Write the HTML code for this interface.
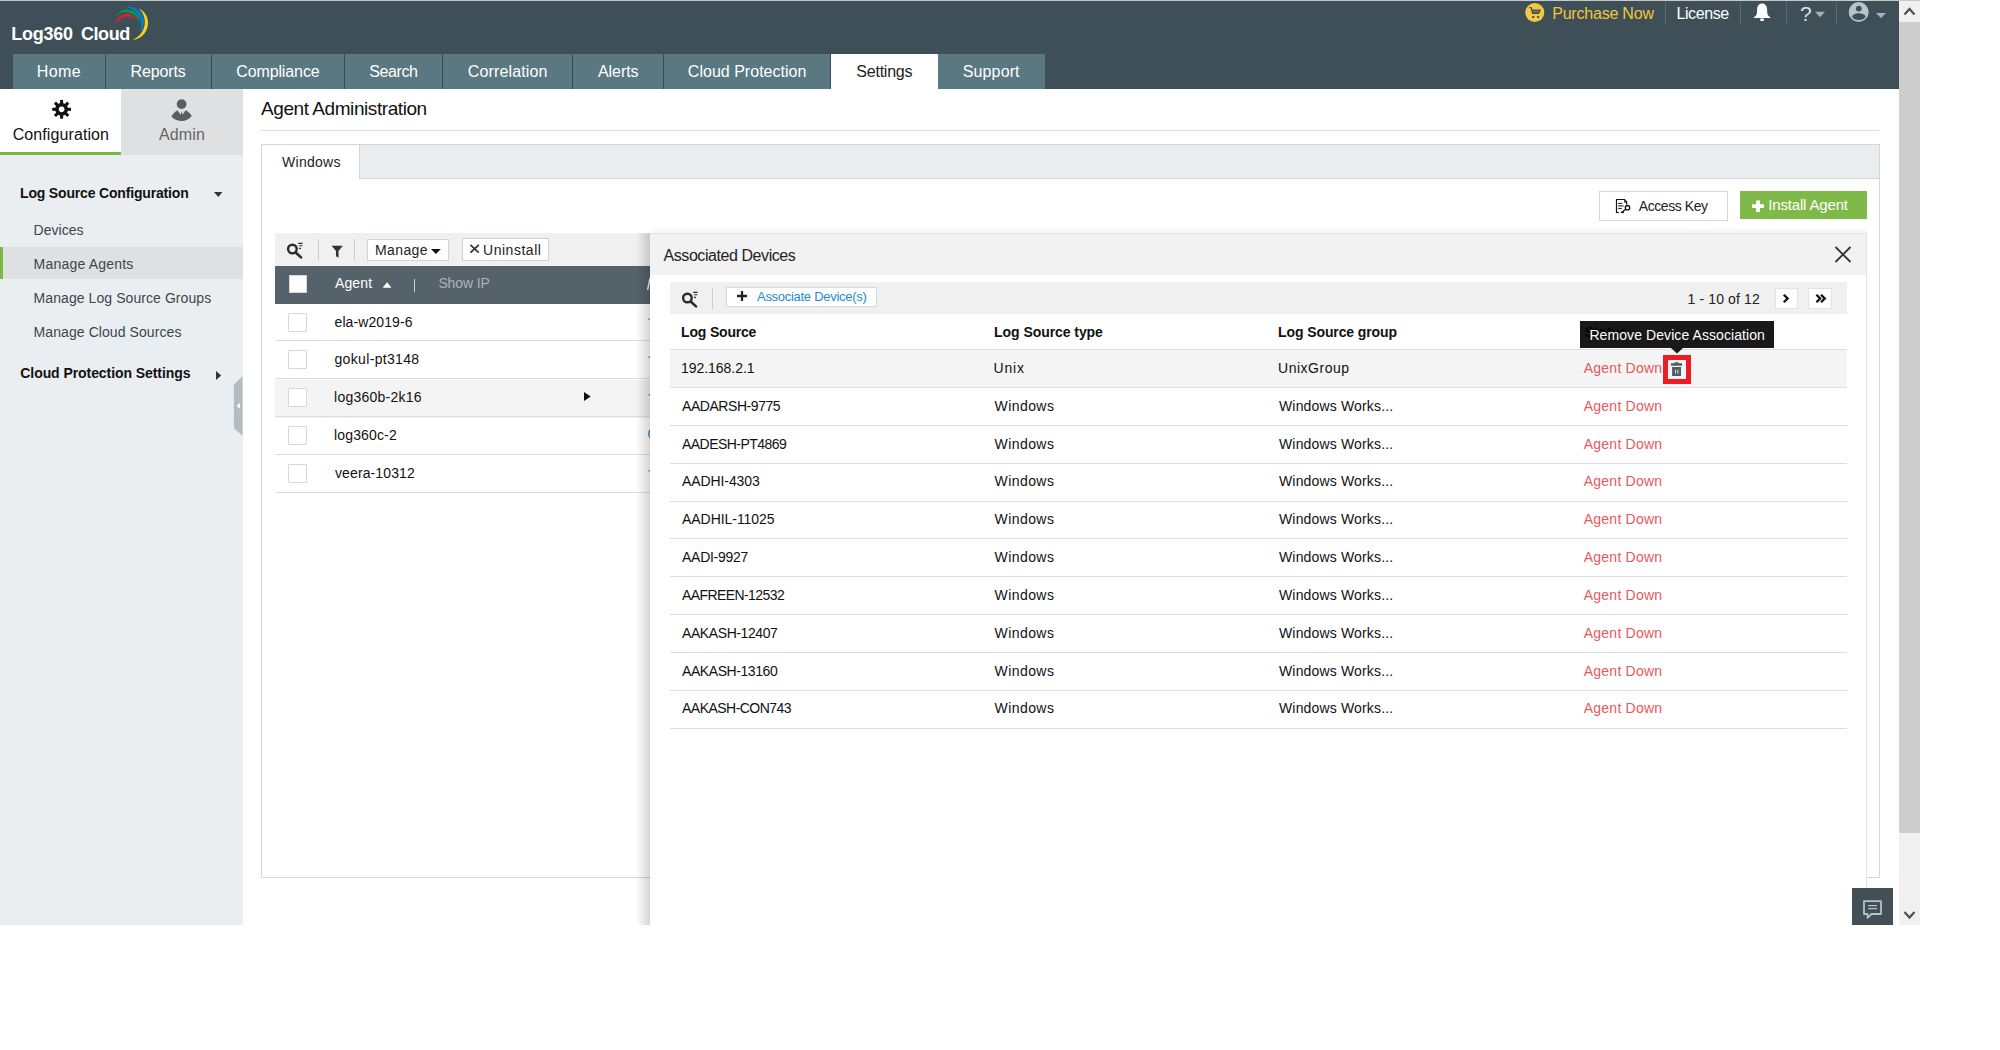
<!DOCTYPE html>
<html><head><meta charset="utf-8"><style>
html,body{margin:0;padding:0;background:#fff;width:2000px;height:1050px;overflow:hidden;}
body{position:relative;font-family:"Liberation Sans",sans-serif;}
#page{position:absolute;left:0;top:0;width:1920px;height:925px;overflow:hidden;}
.t{position:absolute;white-space:nowrap;line-height:1;}
.b{position:absolute;}
svg{position:absolute;overflow:visible}
</style></head><body>
<div id="page">
<div class="b" style="left:0px;top:0px;width:1920px;height:1px;background:#c9c9c9"></div>
<div class="b" style="left:0px;top:1px;width:1899px;height:88px;background:#3e4f57"></div>
<div class="b" style="left:0px;top:89px;width:243px;height:836px;background:#eaeef0"></div>
<div class="b" style="left:0px;top:89px;width:121px;height:63px;background:#fff"></div>
<div class="b" style="left:0px;top:152px;width:121px;height:3px;background:#78b843"></div>
<div class="b" style="left:121px;top:89px;width:122px;height:66px;background:#dfe0e2"></div>
<div class="b" style="left:1899px;top:1px;width:21px;height:924px;background:#f0f0f0"></div>
<div class="b" style="left:1899px;top:22px;width:21px;height:811px;background:#cdcdcd"></div>
<svg style="left:1899px;top:1px" width="21" height="924" viewBox="1899 1 21 924"><path d="M1904.5,14.5 L1909.5,9 L1914.5,14.5" fill="none" stroke="#505050" stroke-width="2.2"/><path d="M1904.5,912 L1909.5,917.5 L1914.5,912" fill="none" stroke="#505050" stroke-width="2.2"/></svg>
<div class="t" style="left:11.20px;top:25.00px;font-size:18px;color:#fff;font-weight:bold;letter-spacing:-0.220px;">Log360</div>
<div class="t" style="left:80.90px;top:25.00px;font-size:18px;color:#fff;font-weight:bold;letter-spacing:-0.400px;">Cloud</div>
<svg style="left:110px;top:3px" width="42" height="40" viewBox="110 3 42 40"><path d="M115.4,24.6 A11.63,11.63 0 0 1 137.4,20.2 A13.84,13.84 0 0 0 115.4,24.6Z" fill="#e31e35"/><path d="M115.8,16.6 A12.54,12.54 0 0 1 139.6,23.4 A13.92,13.92 0 0 0 115.8,16.6Z" fill="#00a04a"/><path d="M125.6,7.0 A15.24,15.24 0 0 1 139.6,32.8 A18.40,18.40 0 0 0 125.6,7.0Z" fill="#0a7cc4"/><path d="M138.6,8 A16.77,16.77 0 0 1 132.4,39.8 A18.92,18.92 0 0 0 138.6,8Z" fill="#fcd01e"/></svg>
<div class="b" style="left:13px;top:54px;width:92px;height:35px;background:#5a7882"></div>
<div class="t" style="left:36.83px;top:64.00px;font-size:16px;color:#fff;letter-spacing:0.350px;">Home</div>
<div class="b" style="left:106px;top:54px;width:105px;height:35px;background:#5a7882"></div>
<div class="t" style="left:130.45px;top:64.00px;font-size:16px;color:#fff;letter-spacing:-0.117px;">Reports</div>
<div class="b" style="left:212px;top:54px;width:132px;height:35px;background:#5a7882"></div>
<div class="t" style="left:236.20px;top:64.00px;font-size:16px;color:#fff;letter-spacing:-0.111px;">Compliance</div>
<div class="b" style="left:345px;top:54px;width:97px;height:35px;background:#5a7882"></div>
<div class="t" style="left:369.30px;top:64.00px;font-size:16px;color:#fff;letter-spacing:-0.400px;">Search</div>
<div class="b" style="left:443px;top:54px;width:129px;height:35px;background:#5a7882"></div>
<div class="t" style="left:467.80px;top:64.00px;font-size:16px;color:#fff;letter-spacing:0.130px;">Correlation</div>
<div class="b" style="left:573px;top:54px;width:90px;height:35px;background:#5a7882"></div>
<div class="t" style="left:598.00px;top:64.00px;font-size:16px;color:#fff;letter-spacing:-0.080px;">Alerts</div>
<div class="b" style="left:664px;top:54px;width:166px;height:35px;background:#5a7882"></div>
<div class="t" style="left:687.83px;top:64.00px;font-size:16px;color:#fff;letter-spacing:0.017px;">Cloud Protection</div>
<div class="b" style="left:831px;top:54px;width:107px;height:35px;background:#fff"></div>
<div class="t" style="left:856.30px;top:64.00px;font-size:16px;color:#222;letter-spacing:-0.229px;">Settings</div>
<div class="b" style="left:938px;top:54px;width:107px;height:35px;background:#5a7882"></div>
<div class="t" style="left:962.80px;top:64.00px;font-size:16px;color:#fff;letter-spacing:0.117px;">Support</div>
<div class="b" style="left:105px;top:54px;width:1px;height:35px;background:#3a4a52"></div>
<div class="b" style="left:211px;top:54px;width:1px;height:35px;background:#3a4a52"></div>
<div class="b" style="left:344px;top:54px;width:1px;height:35px;background:#3a4a52"></div>
<div class="b" style="left:442px;top:54px;width:1px;height:35px;background:#3a4a52"></div>
<div class="b" style="left:572px;top:54px;width:1px;height:35px;background:#3a4a52"></div>
<div class="b" style="left:663px;top:54px;width:1px;height:35px;background:#3a4a52"></div>
<svg style="left:1524px;top:2px" width="22" height="22" viewBox="1524 2 22 22"><circle cx="1534.8" cy="12.5" r="9.5" fill="#f5c842"/><path d="M1529.3,7.6 H1531.2 L1532.6,13.4 H1538.6 L1540.2,10.2 H1531.6" fill="none" stroke="#3e4f57" stroke-width="1.3" stroke-linejoin="round"/><path d="M1532,10.6 H1539.6 L1538.4,13 H1532.6Z" fill="#3e4f57" opacity="0.75"/><rect x="1532.2" y="16" width="2" height="2" fill="#3e4f57"/><rect x="1537.2" y="16" width="2" height="2" fill="#3e4f57"/></svg>
<div class="t" style="left:1552.20px;top:6.00px;font-size:16px;color:#f3c53a;letter-spacing:-0.209px;">Purchase Now</div>
<div class="t" style="left:1676.40px;top:6.00px;font-size:16px;color:#fff;letter-spacing:-0.400px;">License</div>
<div class="b" style="left:1665px;top:2px;width:1px;height:23px;background:#5a6970"></div>
<div class="b" style="left:1740px;top:2px;width:1px;height:23px;background:#5a6970"></div>
<div class="b" style="left:1786px;top:2px;width:1px;height:23px;background:#5a6970"></div>
<div class="b" style="left:1836px;top:2px;width:1px;height:23px;background:#5a6970"></div>
<svg style="left:1750px;top:1px" width="24" height="24" viewBox="1750 1 24 24"><path d="M1762,3.6 C1759.2,3.6 1757.4,5.6 1757.2,8.6 L1756.9,13.2 C1756.7,15 1755.6,16.2 1753.8,17.2 L1753.8,18 H1770.4 L1770.4,17.2 C1768.6,16.2 1767.4,15 1767.3,13.2 L1767,8.6 C1766.8,5.6 1765,3.6 1762,3.6Z" fill="#fff"/><rect x="1760.2" y="18.6" width="3.8" height="2.4" rx="0.8" fill="#fff"/></svg>
<div class="t" style="left:1800.10px;top:3.00px;font-size:21px;color:#d9e0e3;">?</div>
<svg style="left:1812px;top:10px" width="16" height="10" viewBox="1812 10 16 10"><path d="M1815,11.8 H1825 L1820,17.3Z" fill="#a3b2b9"/></svg>
<svg style="left:1846px;top:0px" width="44" height="24" viewBox="1846 0 44 24"><circle cx="1858.7" cy="12" r="10" fill="#b6c3c9"/><circle cx="1858.8" cy="8.6" r="2.9" fill="#3e4f57"/><ellipse cx="1858.8" cy="16.6" rx="6.6" ry="3.3" fill="#3e4f57"/><path d="M1876,13 H1886 L1881,18.2Z" fill="#a3b2b9"/></svg>
<svg style="left:50px;top:98px" width="24" height="24" viewBox="50 98 24 24"><g fill="#111"><rect x="60.1" y="99.9" width="3" height="5" transform="rotate(0 61.6 109.3)"/><rect x="60.1" y="99.9" width="3" height="5" transform="rotate(45 61.6 109.3)"/><rect x="60.1" y="99.9" width="3" height="5" transform="rotate(90 61.6 109.3)"/><rect x="60.1" y="99.9" width="3" height="5" transform="rotate(135 61.6 109.3)"/><rect x="60.1" y="99.9" width="3" height="5" transform="rotate(180 61.6 109.3)"/><rect x="60.1" y="99.9" width="3" height="5" transform="rotate(225 61.6 109.3)"/><rect x="60.1" y="99.9" width="3" height="5" transform="rotate(270 61.6 109.3)"/><rect x="60.1" y="99.9" width="3" height="5" transform="rotate(315 61.6 109.3)"/></g><path fill="#111" fill-rule="evenodd" d="M61.6,102.9 a6.4,6.4 0 1,0 0.001,0Z M61.6,106.4 a2.9,2.9 0 1,1 -0.001,0Z"/></svg>
<div class="t" style="left:12.70px;top:127.00px;font-size:16px;color:#111;letter-spacing:0.092px;">Configuration</div>
<svg style="left:168px;top:97px" width="28" height="27" viewBox="168 97 28 27"><circle cx="181.6" cy="104.1" r="4.9" fill="#5b5e5f"/><path d="M171.4,116.6 C173.5,113 175.5,111.2 177.3,110.2 L180.7,114.8 L181.6,111 L182.5,114.8 L185.7,110.2 C188,111.2 190.2,113.2 191.7,116 C189,119.6 185.6,121 181.6,121 C177.4,121 174,119.6 171.4,116.6Z" fill="#5b5e5f"/><path d="M181.05,110.6 H182.15 L181.6,112.4Z" fill="#dfe0e2"/></svg>
<div class="t" style="left:159.00px;top:127.00px;font-size:16px;color:#666;letter-spacing:0.150px;">Admin</div>
<div class="t" style="left:20.00px;top:186.00px;font-size:14px;color:#111;font-weight:bold;letter-spacing:-0.170px;">Log Source Configuration</div>
<svg style="left:212px;top:190px" width="12" height="9" viewBox="212 190 12 9"><path d="M214,192 H222.5 L218.25,197Z" fill="#333"/></svg>
<div class="b" style="left:0px;top:247px;width:243px;height:32px;background:#dfe0e2"></div>
<div class="b" style="left:0px;top:247px;width:3px;height:32px;background:#78b843"></div>
<div class="t" style="left:33.60px;top:223.00px;font-size:14px;color:#3b4652;letter-spacing:0.017px;">Devices</div>
<div class="t" style="left:33.60px;top:257.00px;font-size:14px;color:#3b4652;letter-spacing:0.200px;">Manage Agents</div>
<div class="t" style="left:33.60px;top:291.00px;font-size:14px;color:#3b4652;letter-spacing:0.074px;">Manage Log Source Groups</div>
<div class="t" style="left:33.60px;top:325.00px;font-size:14px;color:#3b4652;letter-spacing:0.079px;">Manage Cloud Sources</div>
<div class="t" style="left:20.30px;top:366.00px;font-size:14px;color:#111;font-weight:bold;letter-spacing:-0.071px;">Cloud Protection Settings</div>
<svg style="left:214px;top:369px" width="10" height="12" viewBox="214 369 10 12"><path d="M216,371 L221.2,375.5 L216,380Z" fill="#333"/></svg>
<svg style="left:232px;top:374px" width="12" height="64" viewBox="232 374 12 64"><path d="M233.9,384.4 L242.5,376 V435.8 L233.9,428.2Z" fill="#b5bbbe"/><path d="M240,403 V408.7 L236.6,405.85Z" fill="#fff"/></svg>
<div class="t" style="left:261.00px;top:99.00px;font-size:19px;color:#111;letter-spacing:-0.426px;">Agent Administration</div>
<div class="b" style="left:261px;top:130px;width:1618px;height:1px;background:#dcdcdc"></div>
<div class="b" style="left:261px;top:144px;width:1619px;height:734px;border:1px solid #d6d6d6;box-sizing:border-box;background:#fff"></div>
<div class="b" style="left:359px;top:145px;width:1520px;height:34px;background:#eaedef;border-bottom:1px solid #d6d6d6;border-left:1px solid #d6d6d6;box-sizing:border-box"></div>
<div class="t" style="left:282.00px;top:155.00px;font-size:14px;color:#222;letter-spacing:0.283px;">Windows</div>
<div class="b" style="left:1599px;top:191px;width:129px;height:30px;border:1px solid #cfd8dc;box-sizing:border-box;background:#fff"></div>
<svg style="left:1612px;top:196px" width="20" height="20" viewBox="1612 196 20 20"><path d="M1619,212.5 H1616.5 V199.5 H1624.5 L1626.6,201.8 V204.6" fill="none" stroke="#111" stroke-width="1.2"/><path d="M1624.2,199.8 V202.4 H1626.4Z" fill="#111"/><path d="M1618.2,203.4 H1622.4 M1618.2,205.9 H1623.6 M1618.2,208.4 H1621.8" stroke="#111" stroke-width="1"/><circle cx="1627.5" cy="207.7" r="2.2" fill="none" stroke="#111" stroke-width="1.3"/><path d="M1625.8,209.3 L1621,212.8 M1622.6,211.6 L1623.6,213.2" stroke="#111" stroke-width="1.4"/></svg>
<div class="t" style="left:1638.75px;top:199.00px;font-size:14px;color:#222;letter-spacing:-0.422px;">Access Key</div>
<div class="b" style="left:1740px;top:191px;width:127px;height:28px;background:#7fba49"></div>
<svg style="left:1750px;top:198px" width="16" height="16" viewBox="1750 198 16 16"><path d="M1756.1,200.5 H1760 V204.2 H1763.9 V208 H1760 V212 H1756.1 V208 H1752.1 V204.2 H1756.1Z" fill="#fff"/></svg>
<div class="t" style="left:1768.20px;top:197.00px;font-size:15px;color:#fff;letter-spacing:-0.158px;">Install Agent</div>
<div class="b" style="left:275px;top:233px;width:400px;height:33px;background:#f0f0f0"></div>
<svg style="left:283px;top:239px" width="24" height="22" viewBox="283 239 24 22"><circle cx="292.4" cy="249" r="4.3" fill="none" stroke="#2b2b2b" stroke-width="2.4"/><path d="M296.2,253 L301.0,257.4" stroke="#2b2b2b" stroke-width="2.6" stroke-linecap="round"/><path d="M298.2,243.4 H302.59999999999997 M299.2,245.8 H302.4 M299.0,248.4 H301.0" stroke="#2b2b2b" stroke-width="1.1"/></svg>
<div class="b" style="left:318px;top:239px;width:1px;height:21px;background:#cdcdcd"></div>
<svg style="left:328px;top:242px" width="18" height="18" viewBox="328 242 18 18"><path d="M331.6,245.8 H342.8 L338.5,251 V257.8 L336,256.3 V251Z" fill="#333"/></svg>
<div class="b" style="left:354px;top:239px;width:1px;height:21px;background:#cdcdcd"></div>
<div class="b" style="left:367px;top:239px;width:82px;height:22px;border:1px solid #cad4d9;box-sizing:border-box;background:#fff"></div>
<div class="t" style="left:374.90px;top:243.00px;font-size:14px;color:#222;letter-spacing:0.420px;">Manage</div>
<svg style="left:429px;top:246px" width="14" height="10" viewBox="429 246 14 10"><path d="M431,249 H440.8 L435.9,254Z" fill="#111"/></svg>
<div class="b" style="left:462px;top:238px;width:87px;height:23px;border:1px solid #cad4d9;box-sizing:border-box;background:#fff"></div>
<svg style="left:468px;top:242px" width="14" height="14" viewBox="468 242 14 14"><path d="M470.4,244.8 L478.8,252.6 M478.8,244.8 L470.4,252.6" stroke="#333" stroke-width="1.7"/></svg>
<div class="t" style="left:483.00px;top:243.00px;font-size:14px;color:#222;letter-spacing:0.525px;">Uninstall</div>
<div class="b" style="left:275px;top:266px;width:400px;height:38px;background:#56626a"></div>
<div class="b" style="left:289px;top:275px;width:18px;height:18px;background:#fff;border:1px solid #d8d8d8;box-sizing:border-box"></div>
<div class="t" style="left:335.00px;top:276.00px;font-size:14px;color:#fff;letter-spacing:0.125px;">Agent</div>
<svg style="left:380px;top:280px" width="14" height="10" viewBox="380 280 14 10"><path d="M382.75,287.75 H391.5 L387.1,282.25Z" fill="#fff"/></svg>
<div class="b" style="left:414px;top:279px;width:1px;height:13px;background:#cfcfcf"></div>
<div class="t" style="left:438.40px;top:276.00px;font-size:14px;color:#aab4ba;letter-spacing:-0.133px;">Show IP</div>
<div class="b" style="left:275px;top:340px;width:400px;height:1px;background:#dedede"></div>
<div class="b" style="left:288px;top:313px;width:19px;height:19px;background:#fff;border:1.5px solid #d3d9dc;box-sizing:border-box;border-radius:1px"></div>
<div class="t" style="left:334.50px;top:315.00px;font-size:14px;color:#111;letter-spacing:0.100px;">ela-w2019-6</div>
<div class="b" style="left:275px;top:378px;width:400px;height:1px;background:#dedede"></div>
<div class="b" style="left:288px;top:350px;width:19px;height:19px;background:#fff;border:1.5px solid #d3d9dc;box-sizing:border-box;border-radius:1px"></div>
<div class="t" style="left:334.50px;top:352.00px;font-size:14px;color:#111;letter-spacing:0.336px;">gokul-pt3148</div>
<div class="b" style="left:275px;top:380px;width:400px;height:38px;background:#f4f4f4"></div>
<div class="b" style="left:275px;top:416px;width:400px;height:1px;background:#dedede"></div>
<div class="b" style="left:288px;top:388px;width:19px;height:19px;background:#fff;border:1.5px solid #d3d9dc;box-sizing:border-box;border-radius:1px"></div>
<div class="t" style="left:334.10px;top:390.00px;font-size:14px;color:#111;letter-spacing:0.236px;">log360b-2k16</div>
<div class="b" style="left:275px;top:454px;width:400px;height:1px;background:#dedede"></div>
<div class="b" style="left:288px;top:426px;width:19px;height:19px;background:#fff;border:1.5px solid #d3d9dc;box-sizing:border-box;border-radius:1px"></div>
<div class="t" style="left:334.10px;top:428.00px;font-size:14px;color:#111;letter-spacing:0.138px;">log360c-2</div>
<div class="b" style="left:275px;top:492px;width:400px;height:1px;background:#dedede"></div>
<div class="b" style="left:288px;top:464px;width:19px;height:19px;background:#fff;border:1.5px solid #d3d9dc;box-sizing:border-box;border-radius:1px"></div>
<div class="t" style="left:335.00px;top:466.00px;font-size:14px;color:#111;letter-spacing:0.110px;">veera-10312</div>
<svg style="left:582px;top:390px" width="10" height="13" viewBox="582 390 10 13"><path d="M584,392 L590.7,396.5 L584,401Z" fill="#111"/></svg>
<svg style="left:640px;top:270px" width="12" height="220" viewBox="640 270 12 220"><path d="M647.6,290 L650,278" stroke="#fff" stroke-width="1.3"/><rect x="648.5" y="318.5" width="2" height="1.5" fill="#5a8fc0"/><rect x="648.5" y="356.5" width="2" height="1.5" fill="#5a8fc0"/><rect x="648.5" y="394" width="2" height="1.5" fill="#5a8fc0"/><path d="M650.5,430 C648.5,431 648,436 650.5,438" stroke="#2a7fc0" stroke-width="1.4" fill="none"/><rect x="648.5" y="470" width="2" height="1.5" fill="#5a8fc0"/></svg>
<div class="b" style="left:636px;top:233px;width:14px;height:692px;background:linear-gradient(to right,rgba(0,0,0,0),rgba(0,0,0,0.17))"></div>
<div class="b" style="left:650px;top:226px;width:1217px;height:7px;background:linear-gradient(to bottom,rgba(0,0,0,0),rgba(0,0,0,0.035))"></div>
<div class="b" style="left:650px;top:233px;width:1217px;height:692px;background:#fff;border-top:1px solid #e2e2e2;border-right:1px solid #e2e2e2;box-sizing:border-box"></div>
<div class="b" style="left:650px;top:234px;width:1216px;height:41px;background:#f2f2f2"></div>
<div class="t" style="left:663.50px;top:248.00px;font-size:16px;color:#222;letter-spacing:-0.429px;">Associated Devices</div>
<svg style="left:1832px;top:244px" width="22" height="22" viewBox="1832 244 22 22"><path d="M1835.5,247 L1850.5,262 M1850.5,247 L1835.5,262" stroke="#333" stroke-width="1.8"/></svg>
<div class="b" style="left:670px;top:282px;width:1177px;height:32px;background:#f0f0f0"></div>
<svg style="left:678px;top:284px" width="24" height="26" viewBox="678 284 24 26"><circle cx="687.4" cy="298" r="4.3" fill="none" stroke="#2b2b2b" stroke-width="2.4"/><path d="M691.1999999999999,302 L696.0,306.4" stroke="#2b2b2b" stroke-width="2.6" stroke-linecap="round"/><path d="M693.1999999999999,292.4 H697.6 M694.1999999999999,294.8 H697.4 M694.0,297.4 H696.0" stroke="#2b2b2b" stroke-width="1.1"/></svg>
<div class="b" style="left:712px;top:288px;width:1px;height:21px;background:#cdcdcd"></div>
<div class="b" style="left:726px;top:287px;width:151px;height:20px;border:1px solid #d3dadd;box-sizing:border-box;background:#fff"></div>
<svg style="left:734px;top:288px" width="16" height="16" viewBox="734 288 16 16"><path d="M742,291 V301 M737,296 H747" stroke="#222" stroke-width="2.3"/></svg>
<div class="t" style="left:757.00px;top:290.00px;font-size:13px;color:#1d8bd1;letter-spacing:-0.283px;">Associate Device(s)</div>
<div class="t" style="left:681.10px;top:325.00px;font-size:14px;color:#111;font-weight:bold;letter-spacing:-0.189px;">Log Source</div>
<div class="t" style="left:994.10px;top:325.00px;font-size:14px;color:#111;font-weight:bold;letter-spacing:-0.064px;">Log Source type</div>
<div class="t" style="left:1278.10px;top:325.00px;font-size:14px;color:#111;font-weight:bold;letter-spacing:-0.107px;">Log Source group</div>
<div class="t" style="left:1584.60px;top:325.00px;font-size:14px;color:#111;font-weight:bold;">Status</div>
<div class="b" style="left:670px;top:349px;width:1177px;height:1px;background:#dedede"></div>
<div class="b" style="left:670px;top:350px;width:1177px;height:37px;background:#f4f4f4"></div>
<div class="b" style="left:670px;top:387px;width:1177px;height:1px;background:#dedede"></div>
<div class="t" style="left:681.00px;top:361.00px;font-size:14px;color:#111;letter-spacing:-0.040px;">192.168.2.1</div>
<div class="t" style="left:993.50px;top:361.00px;font-size:14px;color:#111;letter-spacing:0.800px;">Unix</div>
<div class="t" style="left:1278.00px;top:361.00px;font-size:14px;color:#111;letter-spacing:0.525px;">UnixGroup</div>
<div class="t" style="left:1583.75px;top:361.00px;font-size:14px;color:#e8585d;letter-spacing:0.233px;">Agent Down</div>
<div class="b" style="left:670px;top:425px;width:1177px;height:1px;background:#dedede"></div>
<div class="t" style="left:682.00px;top:399.00px;font-size:14px;color:#111;letter-spacing:-0.445px;">AADARSH-9775</div>
<div class="t" style="left:994.50px;top:399.00px;font-size:14px;color:#111;letter-spacing:0.433px;">Windows</div>
<div class="t" style="left:1279.00px;top:399.00px;font-size:14px;color:#111;letter-spacing:0.160px;">Windows Works...</div>
<div class="t" style="left:1583.75px;top:399.00px;font-size:14px;color:#e8585d;letter-spacing:0.233px;">Agent Down</div>
<div class="b" style="left:670px;top:463px;width:1177px;height:1px;background:#dedede"></div>
<div class="t" style="left:682.00px;top:437.00px;font-size:14px;color:#111;letter-spacing:-0.533px;">AADESH-PT4869</div>
<div class="t" style="left:994.50px;top:437.00px;font-size:14px;color:#111;letter-spacing:0.433px;">Windows</div>
<div class="t" style="left:1279.00px;top:437.00px;font-size:14px;color:#111;letter-spacing:0.160px;">Windows Works...</div>
<div class="t" style="left:1583.75px;top:437.00px;font-size:14px;color:#e8585d;letter-spacing:0.233px;">Agent Down</div>
<div class="b" style="left:670px;top:501px;width:1177px;height:1px;background:#dedede"></div>
<div class="t" style="left:682.00px;top:474.00px;font-size:14px;color:#111;letter-spacing:-0.089px;">AADHI-4303</div>
<div class="t" style="left:994.50px;top:474.00px;font-size:14px;color:#111;letter-spacing:0.433px;">Windows</div>
<div class="t" style="left:1279.00px;top:474.00px;font-size:14px;color:#111;letter-spacing:0.160px;">Windows Works...</div>
<div class="t" style="left:1583.75px;top:474.00px;font-size:14px;color:#e8585d;letter-spacing:0.233px;">Agent Down</div>
<div class="b" style="left:670px;top:538px;width:1177px;height:1px;background:#dedede"></div>
<div class="t" style="left:682.00px;top:512.00px;font-size:14px;color:#111;letter-spacing:-0.045px;">AADHIL-11025</div>
<div class="t" style="left:994.50px;top:512.00px;font-size:14px;color:#111;letter-spacing:0.433px;">Windows</div>
<div class="t" style="left:1279.00px;top:512.00px;font-size:14px;color:#111;letter-spacing:0.160px;">Windows Works...</div>
<div class="t" style="left:1583.75px;top:512.00px;font-size:14px;color:#e8585d;letter-spacing:0.233px;">Agent Down</div>
<div class="b" style="left:670px;top:576px;width:1177px;height:1px;background:#dedede"></div>
<div class="t" style="left:682.00px;top:550.00px;font-size:14px;color:#111;letter-spacing:-0.275px;">AADI-9927</div>
<div class="t" style="left:994.50px;top:550.00px;font-size:14px;color:#111;letter-spacing:0.433px;">Windows</div>
<div class="t" style="left:1279.00px;top:550.00px;font-size:14px;color:#111;letter-spacing:0.160px;">Windows Works...</div>
<div class="t" style="left:1583.75px;top:550.00px;font-size:14px;color:#e8585d;letter-spacing:0.233px;">Agent Down</div>
<div class="b" style="left:670px;top:614px;width:1177px;height:1px;background:#dedede"></div>
<div class="t" style="left:682.00px;top:588.00px;font-size:14px;color:#111;letter-spacing:-0.583px;">AAFREEN-12532</div>
<div class="t" style="left:994.50px;top:588.00px;font-size:14px;color:#111;letter-spacing:0.433px;">Windows</div>
<div class="t" style="left:1279.00px;top:588.00px;font-size:14px;color:#111;letter-spacing:0.160px;">Windows Works...</div>
<div class="t" style="left:1583.75px;top:588.00px;font-size:14px;color:#e8585d;letter-spacing:0.233px;">Agent Down</div>
<div class="b" style="left:670px;top:652px;width:1177px;height:1px;background:#dedede"></div>
<div class="t" style="left:682.00px;top:626.00px;font-size:14px;color:#111;letter-spacing:-0.409px;">AAKASH-12407</div>
<div class="t" style="left:994.50px;top:626.00px;font-size:14px;color:#111;letter-spacing:0.433px;">Windows</div>
<div class="t" style="left:1279.00px;top:626.00px;font-size:14px;color:#111;letter-spacing:0.160px;">Windows Works...</div>
<div class="t" style="left:1583.75px;top:626.00px;font-size:14px;color:#e8585d;letter-spacing:0.233px;">Agent Down</div>
<div class="b" style="left:670px;top:690px;width:1177px;height:1px;background:#dedede"></div>
<div class="t" style="left:682.00px;top:664.00px;font-size:14px;color:#111;letter-spacing:-0.427px;">AAKASH-13160</div>
<div class="t" style="left:994.50px;top:664.00px;font-size:14px;color:#111;letter-spacing:0.433px;">Windows</div>
<div class="t" style="left:1279.00px;top:664.00px;font-size:14px;color:#111;letter-spacing:0.160px;">Windows Works...</div>
<div class="t" style="left:1583.75px;top:664.00px;font-size:14px;color:#e8585d;letter-spacing:0.233px;">Agent Down</div>
<div class="b" style="left:670px;top:728px;width:1177px;height:1px;background:#dedede"></div>
<div class="t" style="left:682.00px;top:701.00px;font-size:14px;color:#111;letter-spacing:-0.525px;">AAKASH-CON743</div>
<div class="t" style="left:994.50px;top:701.00px;font-size:14px;color:#111;letter-spacing:0.433px;">Windows</div>
<div class="t" style="left:1279.00px;top:701.00px;font-size:14px;color:#111;letter-spacing:0.160px;">Windows Works...</div>
<div class="t" style="left:1583.75px;top:701.00px;font-size:14px;color:#e8585d;letter-spacing:0.233px;">Agent Down</div>
<div class="t" style="left:1687.50px;top:292.00px;font-size:14px;color:#222;letter-spacing:0.127px;">1 - 10 of 12</div>
<div class="b" style="left:1775px;top:288px;width:23px;height:21px;background:#fff;border:1px solid #dde3e6;box-sizing:border-box"></div>
<div class="b" style="left:1808px;top:288px;width:24px;height:21px;background:#fff;border:1px solid #dde3e6;box-sizing:border-box"></div>
<svg style="left:1778px;top:290px" width="50" height="18" viewBox="1778 290 50 18"><path d="M1783.8,294.8 L1787.6,298.5 L1783.8,302.3" fill="none" stroke="#111" stroke-width="2.3"/><path d="M1816.4,294.8 L1820.2,298.5 L1816.4,302.3 M1821,294.8 L1824.8,298.5 L1821,302.3" fill="none" stroke="#111" stroke-width="2.3"/></svg>
<div class="b" style="left:1580px;top:321px;width:194px;height:27px;background:rgba(0,0,0,0.9)"></div>
<svg style="left:1668px;top:346px" width="18" height="10" viewBox="1668 346 18 10"><path d="M1671,348 H1683 L1677,353.6Z" fill="rgba(0,0,0,0.9)"/></svg>
<div class="t" style="left:1589.40px;top:328.00px;font-size:14px;color:#fff;letter-spacing:0.083px;">Remove Device Association</div>
<div class="b" style="left:1663px;top:355px;width:28px;height:29px;border:5px solid #ec1c24;box-sizing:border-box"></div>
<svg style="left:1668px;top:360px" width="18" height="19" viewBox="1668 360 18 19"><path d="M1671,363.2 H1674.2 L1674.8,362.2 H1678.4 L1679,363.2 H1682.1 V365.8 H1671Z" fill="#515c61"/><path d="M1672.1,367.1 H1681 V375.9 H1672.1Z M1675.2,369.8 V373.6 H1676.1 V369.8Z M1677.5,369.8 V373.6 H1678.4 V369.8Z" fill="#515c61" fill-rule="evenodd"/></svg>
<div class="b" style="left:1852px;top:888px;width:41px;height:37px;background:#424f57"></div>
<svg style="left:1860px;top:897px" width="26" height="24" viewBox="1860 897 26 24"><path d="M1867.5,914 H1864 V901.2 H1881 V914 H1871.4 L1867.6,917.8Z" fill="none" stroke="#b8c0c4" stroke-width="1.8" stroke-linejoin="round"/><path d="M1868.2,905.6 H1877 M1868.2,908.6 H1877" stroke="#b8c0c4" stroke-width="1.4"/></svg>
</div>
</body></html>
